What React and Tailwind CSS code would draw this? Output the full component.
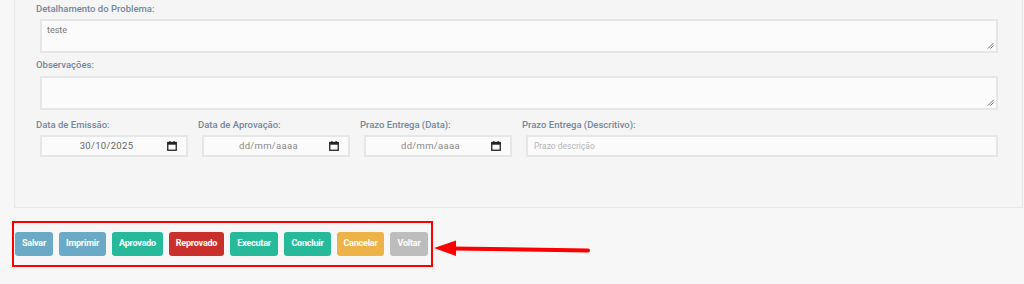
import React from "react";

function Cal() {
  return (
    <svg width="10" height="10" viewBox="0 0 10 10" className="shrink-0">
      <rect x="0.75" y="1.5" width="8.5" height="7.75" fill="none" stroke="#222" strokeWidth="1.3" />
      <rect x="0.75" y="1.5" width="8.5" height="2.2" fill="#222" />
      <rect x="2.3" y="0" width="1.2" height="2" fill="#222" />
      <rect x="6.5" y="0" width="1.2" height="2" fill="#222" />
    </svg>
  );
}

function DateBox({ value, placeholder }) {
  return (
    <div className="ml-[4px] w-[148px] h-[22px] border-2 border-[#e6e6e6] bg-[#fbfbfb] flex items-center pr-[9px]">
      <span className={"flex-1 text-center text-[9.5px] tracking-[0.3px] pl-[4px] " + (placeholder ? "text-[#8a8a8a]" : "text-[#666]")}>{value}</span>
      <Cal />
    </div>
  );
}

const Label = ({ children }) => (
  <div className="text-[9.5px] font-medium text-[#73879c] leading-[14px]">{children}</div>
);

export default function App() {
  const btns = [
    ["Salvar", "bg-[#6aaac6]", "w-[38px]"],
    ["Imprimir", "bg-[#6aaac6]", "w-[47px]"],
    ["Aprovado", "bg-[#26b99a]", "w-[51px]"],
    ["Reprovado", "bg-[#c9302c]", "w-[55px]"],
    ["Executar", "bg-[#26b99a]", "w-[48px]"],
    ["Concluir", "bg-[#26b99a]", "w-[47px]"],
    ["Cancelar", "bg-[#eeb348]", "w-[47px]"],
    ["Voltar", "bg-[#bdbdbd]", "w-[38px]"],
  ];
  return (
    <div className="relative w-[1024px] h-[284px] bg-[#f7f7f7] overflow-hidden" style={{ fontFamily: "Roboto, 'Liberation Sans', sans-serif" }}>
      <div className="ml-[14px] w-[1009px] mt-[-10px] h-[218px] border border-[#e6e6e6] bg-[#f5f5f5] pl-[21px] pr-[24px] pt-[11px]">
        <Label>Detalhamento do Problema:</Label>
        <div className="ml-[4px] mt-[3px] h-[34px] border-2 border-[#e6e6e6] bg-[#fbfbfb] relative pl-[5px] pt-[3px] text-[9px] leading-[12px] text-[#777]">
          teste
          <svg className="absolute right-[2px] bottom-[2px]" width="7" height="7" viewBox="0 0 7 7">
            <path d="M1 6.5L6.5 1M3.5 6.5L6.5 3.5" stroke="#777" strokeWidth="1" />
          </svg>
        </div>
        <div className="mt-[5px]"><Label>Observações:</Label></div>
        <div className="ml-[4px] mt-[4px] h-[34px] border-2 border-[#e6e6e6] bg-[#fbfbfb] relative">
          <svg className="absolute right-[2px] bottom-[2px]" width="7" height="7" viewBox="0 0 7 7">
            <path d="M1 6.5L6.5 1M3.5 6.5L6.5 3.5" stroke="#777" strokeWidth="1" />
          </svg>
        </div>
        <div className="flex mt-[8px]">
          <div className="w-[162px]">
            <Label>Data de Emissão:</Label>
            <div className="mt-[3px]"><DateBox value="30/10/2025" /></div>
          </div>
          <div className="w-[162px]">
            <Label>Data de Aprovação:</Label>
            <div className="mt-[3px]"><DateBox value="dd/mm/aaaa" placeholder /></div>
          </div>
          <div className="w-[162px]">
            <Label>Prazo Entrega (Data):</Label>
            <div className="mt-[3px]"><DateBox value="dd/mm/aaaa" placeholder /></div>
          </div>
          <div className="flex-1">
            <Label>Prazo Entrega (Descritivo):</Label>
            <div className="mt-[3px] ml-[4px] h-[22px] border-2 border-[#e6e6e6] bg-[#fbfbfb] flex items-center pl-[6px] text-[8.5px] text-[#b5b5b5]">
              Prazo descrição
            </div>
          </div>
        </div>
      </div>
      <div className="ml-[12px] mt-[13px] w-[421px] h-[46px] border-2 border-[#ff0000] flex items-center gap-[6px] pl-[1px]">
        {btns.map(([t, bg, w]) => (
          <div key={t} className={"h-[24px] rounded-[3px] flex items-center justify-center text-white text-[9px] font-bold tracking-[-0.2px] " + bg + " " + w}>
            {t}
          </div>
        ))}
      </div>
      <svg className="absolute left-0 top-0" width="1024" height="284">
        <line x1="452" y1="248.5" x2="588" y2="250.5" stroke="#ff0000" strokeWidth="4" strokeLinecap="round" />
        <polygon points="434,248 456,240.5 456,256" fill="#ff0000" />
      </svg>
    </div>
  );
}
